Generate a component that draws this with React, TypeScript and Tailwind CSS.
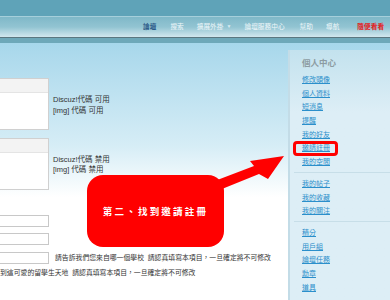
import React from "react";

const navItems = [
  { label: "論壇", cls: "ml-[143px] text-[#2b5a88] font-bold" },
  { label: "搜索", cls: "ml-[14px] text-[#eef7fa]" },
  { label: "擴展外掛", cls: "ml-[13px] text-[#eef7fa]", caret: true },
  { label: "論壇服務中心", cls: "ml-[13px] text-[#eef7fa]" },
  { label: "幫助", cls: "ml-[15px] text-[#eef7fa]" },
  { label: "導航", cls: "ml-[13px] text-[#eef7fa]" },
  { label: "隨便看看", cls: "ml-[18px] text-[#e41b1b] font-bold" },
];

const groups = [
  ["修改頭像", "個人資料", "短消息", "提醒", "我的好友", "邀請註冊", "我的空間"],
  ["我的帖子", "我的收藏", "我的關注"],
  ["積分", "用戶組", "論壇任務", "勳章", "道具"],
];

export default function App() {
  return (
    <div className="relative w-[390px] h-[300px] overflow-hidden bg-white font-['Liberation_Sans','Noto_Sans_CJK_TC',sans-serif]">
      {/* HEADER */}
      <div className="h-[16px] bg-[#5fa3b8]" />
      <div className="h-px bg-[#a6cfdb]" />
      <div className="h-[20px] flex items-center bg-gradient-to-b from-[#7fb8c8] via-[#92c4d2] to-[#d2e7ee] text-[6.7px] leading-none">
        {navItems.map((n) => (
          <span key={n.label} className={"flex items-center whitespace-nowrap " + n.cls}>
            {n.label}
            {n.caret && <span className="ml-[3px] text-[5px] text-[#d8ebf1]">▼</span>}
          </span>
        ))}
      </div>
      <div className="h-px bg-[#5b7780]" />
      <div className="h-[5px] bg-[#6ea8b9]" />

      {/* BODY */}
      <div className="flex h-[257px] bg-gradient-to-b from-[#a7d7eb] via-[#d6edf6] via-40% to-white to-60%">
        {/* MAIN */}
        <div className="flex-1 pt-[35px] text-[#333] text-[7.5px]">
          <div className="flex">
            <div className="w-[49px] h-[52px] border-y border-r border-[#d0d0d0] bg-white">
              <div className="h-[14px] bg-[#f3f3f3] border-b border-[#e4e4e4]" />
            </div>
            <div className="ml-[4px] pt-[16px] leading-[11px]">
              <div>Discuz!代碼 可用</div>
              <div>[img] 代碼 可用</div>
            </div>
          </div>
          <div className="flex mt-[8px]">
            <div className="w-[49px] h-[52px] border-y border-r border-[#d0d0d0] bg-white">
              <div className="h-[14px] bg-[#f3f3f3] border-b border-[#e4e4e4]" />
            </div>
            <div className="ml-[4px] pt-[17px] leading-[10px]">
              <div>Discuz!代碼 禁用</div>
              <div>[img] 代碼 禁用</div>
            </div>
          </div>
          <div className="mt-[25px] w-[49px] h-[12px] border-y border-r border-[#c8c8c8] bg-white" />
          <div className="mt-[6px] w-[49px] h-[12px] border-y border-r border-[#c8c8c8] bg-white" />
          <div className="mt-[7px] flex items-center">
            <div className="w-[49px] h-[12px] border-y border-r border-[#c8c8c8] bg-white" />
            <span className="ml-[6px] text-[6.85px] whitespace-nowrap">
              請告訴我們您來自哪一個學校&nbsp;&nbsp;請認真填寫本項目，一旦確定將不可修改
            </span>
          </div>
          <div className="mt-[4px] text-[6.85px] whitespace-nowrap leading-[10px]">
            到這可愛的留學生天地&nbsp;&nbsp;請認真填寫本項目，一旦確定將不可修改
          </div>
        </div>

        {/* SIDEBAR */}
        <div className="w-[102px] mt-[7px] border-l-2 border-[#c3dce7] bg-gradient-to-b from-[#c3e2ee] to-[#ddeef6] to-[25%] pl-[12px]">
          <div className="pt-[8px] h-[22px] text-[8.5px] leading-[10px] text-[#8c9ba1] font-bold">個人中心</div>
          {groups.map((g, i) => (
            <div key={i} className={i > 0 ? "mt-[3px] -ml-[8px] pl-[8px] border-t border-[#c7dee8] pt-[4px]" : "mt-[1px]"}>
              {g.map((l) => (
                <div key={l} className="h-[13.7px] leading-[13.7px] text-[7px]">
                  <span className="text-[#2b8fcb] underline">{l}</span>
                </div>
              ))}
            </div>
          ))}
        </div>
      </div>

      {/* OVERLAYS */}
      <div className="absolute left-[293px] top-[141px] w-[45px] h-[15px] border-[3px] border-[#ff0000] rounded-[4px]" />
      <svg className="absolute left-0 top-0 pointer-events-none" width="390" height="300">
        <polygon points="212,182 254,166 250,161 284,156 268,179 259,174 217,191" fill="#ff0000" />
      </svg>
      <div className="absolute left-[87px] top-[175px] w-[137px] h-[72px] rounded-[16px] bg-[#ff0000] flex items-center justify-center">
        <span className="text-white text-[9.5px] font-bold tracking-[2.2px] whitespace-nowrap font-['Noto_Sans_CJK_TC',sans-serif]">
          第二、找到邀請註冊
        </span>
      </div>
    </div>
  );
}
